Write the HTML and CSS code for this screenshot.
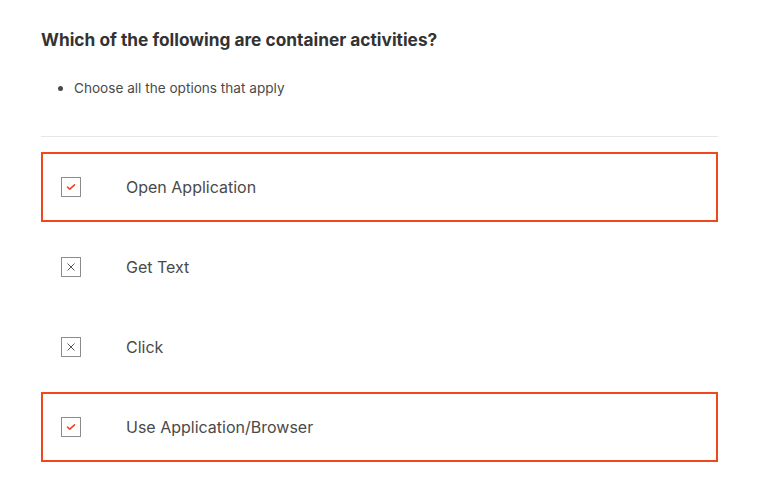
FILE: index.html
```html
<!DOCTYPE html>
<html>
<head>
<meta charset="utf-8">
<link rel="stylesheet" href="styles.css">
</head>
<body>
<div class="quiz">
  <h2 class="question">Which of the following are container activities?</h2>
  <ul class="hints">
    <li>Choose all the options that apply</li>
  </ul>
  <hr class="divider">
  <div class="options">
    <div class="option selected">
      <span class="check">
        <svg width="10" height="8" viewBox="0 0 10 8"><path d="M1.5 4.2 L3.8 6.2 L8.5 1.8" fill="none" stroke="#f0471c" stroke-width="1.6" stroke-linecap="round" stroke-linejoin="round"/></svg>
      </span>
      <span class="label">Open Application</span>
    </div>
    <div class="option">
      <span class="check">
        <svg width="10" height="10" viewBox="0 0 10 10"><path d="M1.5 1.5 L8.5 8.5 M8.5 1.5 L1.5 8.5" fill="none" stroke="#555" stroke-width="1"/></svg>
      </span>
      <span class="label">Get Text</span>
    </div>
    <div class="option">
      <span class="check">
        <svg width="10" height="10" viewBox="0 0 10 10"><path d="M1.5 1.5 L8.5 8.5 M8.5 1.5 L1.5 8.5" fill="none" stroke="#555" stroke-width="1"/></svg>
      </span>
      <span class="label">Click</span>
    </div>
    <div class="option selected">
      <span class="check">
        <svg width="10" height="8" viewBox="0 0 10 8"><path d="M1.5 4.2 L3.8 6.2 L8.5 1.8" fill="none" stroke="#f0471c" stroke-width="1.6" stroke-linecap="round" stroke-linejoin="round"/></svg>
      </span>
      <span class="label">Use Application/Browser</span>
    </div>
  </div>
</div>
</body>
</html>
```
FILE: styles.css
```css
html, body {
  margin: 0;
  padding: 0;
  background: #fff;
}
body {
  font-family: Inter, "Noto Sans", sans-serif;
  color: #333;
}
.quiz {
  width: 677px;
  margin-left: 41px;
  padding-top: 29px;
}
.question {
  margin: 0;
  font-size: 17.3px;
  line-height: 22px;
  font-weight: 700;
  color: #333;
}
.hints {
  margin: 28px 0 0 0;
  padding-left: 33px;
  font-size: 13.6px;
  line-height: 18px;
  color: #4a4a4a;
}
.hints li::marker {
  font-size: 14px;
}
.divider {
  margin: 39px 0 0 0;
  border: none;
  border-top: 1px solid #e6e6e6;
  height: 0;
}
.options {
  margin-top: 15px;
  display: flex;
  flex-direction: column;
  gap: 10px;
}
.option {
  box-sizing: border-box;
  height: 70px;
  display: flex;
  align-items: center;
  padding-left: 18px;
  border: 2px solid transparent;
}
.option.selected {
  border-color: #f0471c;
}
.check {
  box-sizing: border-box;
  width: 20px;
  height: 20px;
  border: 1px solid #8c8c8c;
  display: flex;
  align-items: center;
  justify-content: center;
}
.label {
  margin-left: 45px;
  font-size: 16px;
  color: #4a4a4a;
}
```
